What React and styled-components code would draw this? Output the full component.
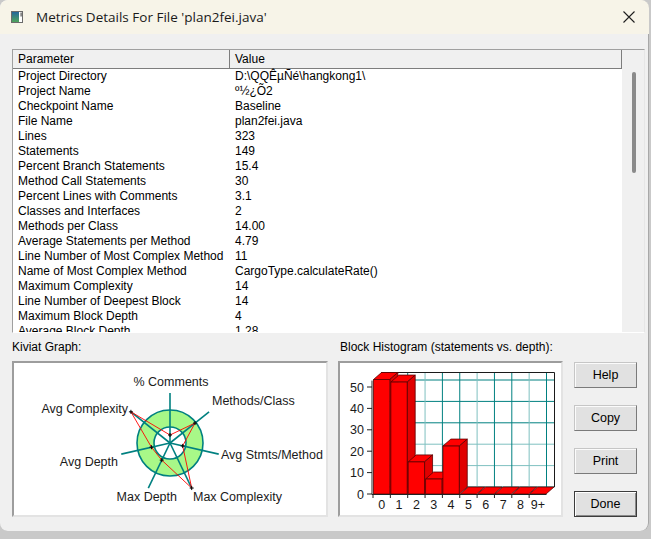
import React from "react"
import styled, { createGlobalStyle } from "styled-components"

const GlobalStyle = createGlobalStyle`
  html, body {
    margin: 0;
    padding: 0;
    background: #c9c9c9;
  }
  body {
    font-family: "Liberation Sans", Arial, sans-serif;
  }
`

const rows = [
  ["Project Directory", "D:\\QQÊµÑé\\hangkong1\\"],
  ["Project Name", "º½¿Õ2"],
  ["Checkpoint Name", "Baseline"],
  ["File Name", "plan2fei.java"],
  ["Lines", "323"],
  ["Statements", "149"],
  ["Percent Branch Statements", "15.4"],
  ["Method Call Statements", "30"],
  ["Percent Lines with Comments", "3.1"],
  ["Classes and Interfaces", "2"],
  ["Methods per Class", "14.00"],
  ["Average Statements per Method", "4.79"],
  ["Line Number of Most Complex Method", "11"],
  ["Name of Most Complex Method", "CargoType.calculateRate()"],
  ["Maximum Complexity", "14"],
  ["Line Number of Deepest Block", "14"],
  ["Maximum Block Depth", "4"],
  ["Average Block Depth", "1.28"],
]

const App = () => {
  return (
    <>
      <GlobalStyle />
      <Window>
        <TitleBar>
          <AppIcon />
          <TitleText>Metrics Details For File 'plan2fei.java'</TitleText>
          <CloseIcon />
        </TitleBar>

        <Body>
          <ListBox>
            <ListContent>
              <HeaderRow>
                <HeaderCell width={217}>Parameter</HeaderCell>
                <HeaderCell grow>Value</HeaderCell>
              </HeaderRow>
              {rows.map(([name, value]) => (
                <Row key={name}>
                  <NameCell>{name}</NameCell>
                  <ValueCell>{value}</ValueCell>
                </Row>
              ))}
            </ListContent>
            <ScrollTrack>
              <Thumb />
            </ScrollTrack>
          </ListBox>

          <BottomArea>
            <SectionLabel indent={0}>Kiviat Graph:</SectionLabel>
            <SectionLabel indent={2}>Block Histogram (statements vs. depth):</SectionLabel>
            <span />

            <Panel>
              <KiviatGraph />
            </Panel>
            <Panel>
              <BlockHistogram />
            </Panel>

            <ButtonColumn>
              <DialogButton>Help</DialogButton>
              <DialogButton>Copy</DialogButton>
              <DialogButton>Print</DialogButton>
              <DialogButton primary>Done</DialogButton>
            </ButtonColumn>
          </BottomArea>
        </Body>
      </Window>
    </>
  )
}

const AppIcon = () => (
  <svg width="12" height="12" viewBox="0 0 12 12">
    <defs>
      <linearGradient id="ic" x1="0" y1="0" x2="0" y2="1">
        <stop offset="0" stopColor="#23669a" />
        <stop offset="1" stopColor="#4fa45c" />
      </linearGradient>
    </defs>
    <rect x="0.5" y="0.5" width="11" height="11" fill="#ffffff" stroke="#6b6b6b" />
    <rect x="1" y="1" width="7" height="10" fill="url(#ic)" />
    <rect x="9.5" y="1.5" width="1.2" height="4" fill="#555" />
  </svg>
)

const CloseIcon = () => (
  <CloseBox>
    <svg width="12" height="12" viewBox="0 0 12 12">
      <path d="M0.5 0.5 L11.5 11.5 M11.5 0.5 L0.5 11.5" stroke="#1f1f1f" strokeWidth="1.1" />
    </svg>
  </CloseBox>
)

/* ---------- Kiviat ---------- */

const kiviatAxes = [
  { label: "% Comments", r: 8, lx: 171, ly: 386, anchor: "middle" },
  { label: "Methods/Class", r: 32, lx: 212, ly: 405, anchor: "start" },
  { label: "Avg Stmts/Method", r: 13, lx: 221, ly: 459, anchor: "start" },
  { label: "Max Complexity", r: 50, lx: 193, ly: 501, anchor: "start" },
  { label: "Max Depth", r: 19, lx: 177, ly: 501, anchor: "end" },
  { label: "Avg Depth", r: 19, lx: 118, ly: 466, anchor: "end" },
  { label: "Avg Complexity", r: 50, lx: 128, ly: 413, anchor: "end" },
]

const KiviatGraph = () => {
  const cx = 170
  const cy = 443
  const pt = (i, r) => {
    const a = ((-90 + (360 / 7) * i) * Math.PI) / 180
    return [cx + r * Math.cos(a), cy + r * Math.sin(a)]
  }
  const data = kiviatAxes.map((ax, i) => pt(i, ax.r))

  return (
    <svg width="312" height="152" viewBox="14 363 312 152">
      <circle cx={cx} cy={cy} r="33" fill="#a8f888" stroke="#008080" strokeWidth="1.6" />
      <circle cx={cx} cy={cy} r="16" fill="#ffffff" stroke="#008080" strokeWidth="1.6" />
      {kiviatAxes.map((ax, i) => {
        const [x, y] = pt(i, 50)
        return <line key={ax.label} x1={cx} y1={cy} x2={x} y2={y} stroke="#008080" strokeWidth="1.6" />
      })}
      <polygon
        points={data.map(p => p.join(",")).join(" ")}
        fill="none"
        stroke="#ff0000"
        strokeWidth="0.9"
      />
      {data.map(([x, y], i) => (
        <path
          key={i}
          d={`M${x - 2} ${y} H${x + 2} M${x} ${y - 2} V${y + 2}`}
          stroke="#000"
          strokeWidth="1"
        />
      ))}
      {kiviatAxes.map(ax => (
        <KiviatLabel key={ax.label} x={ax.lx} y={ax.ly} textAnchor={ax.anchor}>
          {ax.label}
        </KiviatLabel>
      ))}
    </svg>
  )
}

/* ---------- Histogram ---------- */

const histValues = [53.5, 52.3, 15, 7, 22.4, 0, 0, 0, 0, 0]
const histLabels = ["0", "1", "2", "3", "4", "5", "6", "7", "8", "9+"]

const BlockHistogram = () => {
  const base = 494
  const unit = 2.14
  const x0 = 373
  const cw = 17.35
  const dx = 8
  const dy = -7
  const right = x0 + cw * 10

  return (
    <svg width="221" height="152" viewBox="340 363 221 152">
      {/* back wall grid */}
      {[0, 10, 20, 30, 40, 50].map((v, j) => (
        <line
          key={"h" + v}
          x1={x0 + dx}
          x2={right + dx}
          y1={base + dy - v * unit}
          y2={base + dy - v * unit}
          stroke={j === 2 || j === 1 ? "#7fc0c0" : "#008080"}
          strokeWidth="1"
        />
      ))}
      {Array.from({ length: 10 }, (_, k) => k + 1).map(k => (
        <line
          key={"v" + k}
          x1={x0 + k * cw}
          x2={x0 + k * cw}
          y1={372.5}
          y2={base + dy}
          stroke={k % 3 === 0 ? "#7fc0c0" : "#008080"}
          strokeWidth="1"
        />
      ))}
      <path
        d={`M${x0 + dx} ${372.5} H${right + dx} V${base + dy}`}
        fill="none"
        stroke="#1a1a1a"
        strokeWidth="1"
      />

      {/* bars */}
      {histValues.map((v, i) => {
        const x = x0 + i * cw + 0.5
        const w = cw - 1
        const h = v * unit
        const y = base - h
        return (
          <g key={i} stroke="#5a0000" strokeWidth="0.8" strokeLinejoin="round">
            <polygon
              points={`${x},${y} ${x + dx},${y + dy} ${x + w + dx},${y + dy} ${x + w},${y}`}
              fill="#ff0000"
            />
            {h > 0 && (
              <>
                <polygon
                  points={`${x + w},${y} ${x + w + dx},${y + dy} ${x + w + dx},${base + dy} ${x + w},${base}`}
                  fill="#e00000"
                />
                <rect x={x} y={y} width={w} height={h} fill="#ff0000" />
              </>
            )}
          </g>
        )
      })}

      {/* axes */}
      <line x1={x0 - 1} x2={x0 - 1} y1={base - 53 * unit} y2={base + 0.5} stroke="#222" strokeWidth="1" />
      <line x1={x0 - 1} x2={right} y1={base + 0.5} y2={base + 0.5} stroke="#222" strokeWidth="1" />
      {[0, 10, 20, 30, 40, 50].map(v => (
        <g key={"y" + v}>
          <line x1={x0 - 6} x2={x0 - 1} y1={base - v * unit} y2={base - v * unit} stroke="#222" />
          <AxisLabel x={x0 - 9} y={base - v * unit + 4.5} textAnchor="end">
            {v}
          </AxisLabel>
        </g>
      ))}
      {histLabels.map((l, i) => (
        <g key={"x" + l}>
          <line x1={x0 + i * cw} x2={x0 + i * cw} y1={base} y2={base + 4} stroke="#222" />
          <AxisLabel x={x0 + i * cw + cw / 2} y={base + 15} textAnchor="middle">
            {l}
          </AxisLabel>
        </g>
      ))}
    </svg>
  )
}

/* ---------- styles ---------- */

const Window = styled.div`
  width: 649px;
  height: 531px;
  background: #f0f0f0;
  border-radius: 8px;
  box-shadow: inset -1px 0 0 #a8a8a8;
  overflow: hidden;
  display: flex;
  flex-direction: column;
`

const TitleBar = styled.div`
  height: 34px;
  flex: none;
  background: #f7f4e8;
  display: flex;
  align-items: center;
  padding: 0 12px 0 11px;
  gap: 13px;

  svg {
    display: block;
  }
`

const TitleText = styled.div`
  flex: 1;
  font-family: "Open Sans", "Liberation Sans", sans-serif;
  font-size: 13.5px;
  color: #1a1a1a;
  padding-bottom: 1px;
`

const CloseBox = styled.div`
  width: 12px;
  height: 12px;
  margin-right: 2px;
`

const Body = styled.div`
  flex: 1;
  padding: 15px 4px 0 12px;
  display: flex;
  flex-direction: column;
`

const ListBox = styled.div`
  height: 284px;
  box-sizing: border-box;
  border: 1px solid;
  border-color: #a0a0a0 #e6e6e6 #ffffff #a0a0a0;
  background: #ffffff;
  display: flex;
  overflow: hidden;
`

const ListContent = styled.div`
  flex: 1;
  overflow: hidden;
  font-size: 12px;
  color: #000;
`

const HeaderRow = styled.div`
  display: flex;
  height: 19px;
  background: #f0f0f0;
  border-bottom: 1px solid #7d7d7d;
  box-sizing: border-box;
`

const HeaderCell = styled.div`
  ${p => (p.grow ? "flex: 1;" : `width: ${p.width}px; flex: none;`)}
  box-sizing: border-box;
  border-right: 1px solid #7d7d7d;
  padding-left: 5px;
  line-height: 19px;
`

const Row = styled.div`
  display: flex;
  height: 15px;
  line-height: 15px;
  white-space: nowrap;
`

const NameCell = styled.div`
  width: 217px;
  flex: none;
  padding-left: 5px;
  box-sizing: border-box;
`

const ValueCell = styled.div`
  flex: 1;
  padding-left: 5px;
`

const ScrollTrack = styled.div`
  width: 22px;
  flex: none;
  background: #f0f0f0;
  padding-top: 22px;
  box-sizing: border-box;
`

const Thumb = styled.div`
  width: 4px;
  height: 101px;
  margin-left: 10px;
  border-radius: 2px;
  background: #8a8a8a;
`

const BottomArea = styled.div`
  display: grid;
  grid-template-columns: 316px 225px 63px;
  grid-template-rows: 28px 156px;
  column-gap: 10px;
`

const SectionLabel = styled.div`
  font-size: 12px;
  color: #000;
  padding-top: 7px;
  padding-left: ${p => p.indent}px;
  line-height: 14px;
  white-space: nowrap;
`

const Panel = styled.div`
  box-sizing: border-box;
  border: 2px solid;
  border-color: #9d9d9d #e3e3e3 #e3e3e3 #9d9d9d;
  background: #ffffff;
  overflow: hidden;

  svg {
    display: block;
  }
`

const KiviatLabel = styled.text`
  font-family: "Liberation Sans", Arial, sans-serif;
  font-size: 12.5px;
  fill: #1a1a1a;
`

const AxisLabel = styled.text`
  font-family: "Liberation Sans", Arial, sans-serif;
  font-size: 12.5px;
  fill: #1a1a1a;
`

const ButtonColumn = styled.div`
  display: flex;
  flex-direction: column;
  gap: 17px;
  padding-top: 1px;
  margin-left: 1px;
`

const DialogButton = styled.button`
  height: 26px;
  width: 63px;
  padding: 0;
  font-family: "Liberation Sans", Arial, sans-serif;
  font-size: 12.5px;
  color: #000;
  background: #e1e1e1;
  border: 1px solid;
  border-color: ${p => (p.primary ? "#3c3c3c" : "#c6c6c6 #7a7a7a #7a7a7a #c6c6c6")};
  box-shadow: ${p =>
    p.primary ? "inset 1px 1px 0 #ffffff, inset -1px -1px 0 #8a8a8a" : "inset 1px 1px 0 #fbfbfb"};
`

export default App
